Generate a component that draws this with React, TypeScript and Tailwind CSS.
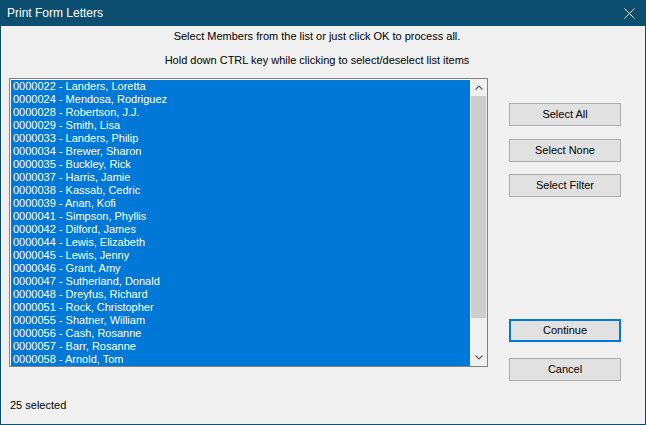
import React from 'react';

const members = [
  '0000022 - Landers, Loretta',
  '0000024 - Mendosa, Rodriguez',
  '0000028 - Robertson, J.J.',
  '0000029 - Smith, Lisa',
  '0000033 - Landers, Philip',
  '0000034 - Brewer, Sharon',
  '0000035 - Buckley, Rick',
  '0000037 - Harris, Jamie',
  '0000038 - Kassab, Cedric',
  '0000039 - Anan, Kofi',
  '0000041 - Simpson, Phyllis',
  '0000042 - Dilford, James',
  '0000044 - Lewis, Elizabeth',
  '0000045 - Lewis, Jenny',
  '0000046 - Grant, Amy',
  '0000047 - Sutherland, Donald',
  '0000048 - Dreyfus, Richard',
  '0000051 - Rock, Christopher',
  '0000055 - Shatner, William',
  '0000056 - Cash, Rosanne',
  '0000057 - Barr, Rosanne',
  '0000058 - Arnold, Tom',
];

const Btn: React.FC<{ label: string; primary?: boolean; className?: string }> = ({ label, primary, className }) => (
  <div
    className={`h-[23px] w-[112px] shrink-0 flex items-center justify-center bg-[#e1e1e1] text-black text-[11px] leading-[13px] ${
      primary ? 'border-2 border-[#0078d7]' : 'border border-[#adadad]'
    } ${className ?? ''}`}
  >
    {label}
  </div>
);

export default function App() {
  return (
    <div
      className="w-[646px] h-[425px] flex flex-col bg-[#f0f0f0] border border-t-0 border-[#0b4e6f]"
      style={{ fontFamily: '"Liberation Sans", Arial, sans-serif' }}
    >
      {/* Title bar */}
      <div className="h-[26px] shrink-0 bg-[#0b4e6f] flex items-center justify-between pl-[6px] pr-[10px]">
        <span className="text-white text-[12px] leading-[14px]">Print Form Letters</span>
        <svg width="11" height="11" viewBox="0 0 11 11">
          <path d="M0.5 0.5 L10.5 10.5 M10.5 0.5 L0.5 10.5" stroke="white" strokeWidth="1" />
        </svg>
      </div>

      {/* Body */}
      <div className="flex-1 flex flex-col px-[8px] text-black">
        <div className="pt-[4px] pr-[12px] text-center text-[11px] leading-[13px]">
          Select Members from the list or just click OK to process all.
        </div>
        <div className="mt-[11px] pr-[12px] text-center text-[11px] leading-[13px]">
          Hold down CTRL key while clicking to select/deselect list items
        </div>

        <div className="mt-[11px] h-[289px] flex">
          {/* List box */}
          <div className="w-[479px] h-[289px] border border-[#828282] bg-white flex">
            <div className="flex-1 p-[1px] pr-0">
              <div className="bg-[#0078d7]">
                {members.map((m) => (
                  <div key={m} className="h-[13px] pl-[2px] text-white text-[11px] leading-[13px] whitespace-nowrap">
                    {m}
                  </div>
                ))}
              </div>
            </div>
            {/* Scrollbar */}
            <div className="w-[17px] flex flex-col bg-[#f0f0f0]">
              <div className="h-[17px] flex items-center justify-center">
                <svg width="8" height="5" viewBox="0 0 8 5">
                  <path d="M0.5 4.5 L4 1 L7.5 4.5" stroke="#606060" strokeWidth="1.2" fill="none" />
                </svg>
              </div>
              <div className="h-[222px] mx-[1px] bg-[#cdcdcd]" />
              <div className="flex-1" />
              <div className="h-[17px] flex items-center justify-center">
                <svg width="8" height="5" viewBox="0 0 8 5">
                  <path d="M0.5 0.5 L4 4 L7.5 0.5" stroke="#606060" strokeWidth="1.2" fill="none" />
                </svg>
              </div>
            </div>
          </div>

          {/* Buttons */}
          <div className="ml-[21px] flex flex-col">
            <Btn label="Select All" className="mt-[25px]" />
            <Btn label="Select None" className="mt-[13px]" />
            <Btn label="Select Filter" className="mt-[12px]" />
            <Btn label="Continue" primary className="mt-[122px]" />
            <Btn label="Cancel" className="mt-[16px]" />
          </div>
        </div>

        <div className="mt-[32px] pl-[1px] text-[11px] leading-[13px]">25 selected</div>
      </div>
    </div>
  );
}
